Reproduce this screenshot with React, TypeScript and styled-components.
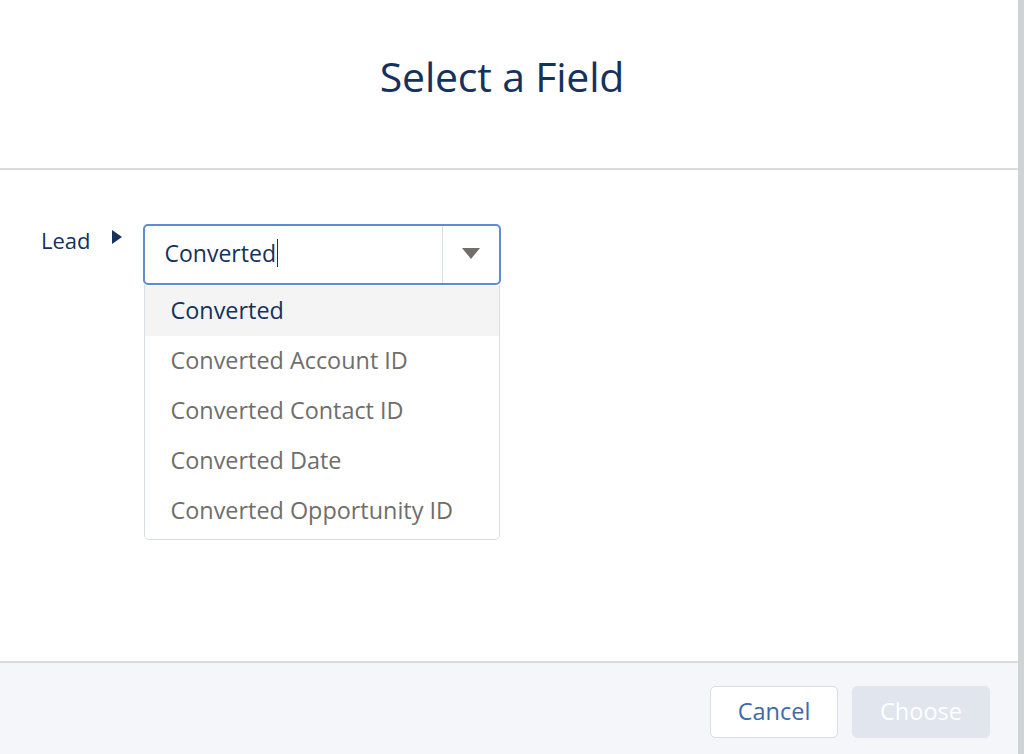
import React, { FC, useState } from "react";
import styled, { createGlobalStyle } from "styled-components";

const GlobalStyle = createGlobalStyle`
  html, body {
    margin: 0;
    padding: 0;
    background: #cfd3d6;
  }
  * {
    box-sizing: border-box;
  }
`;

const fields = [
  "Converted",
  "Converted Account ID",
  "Converted Contact ID",
  "Converted Date",
  "Converted Opportunity ID",
];

const App: FC = () => {
  const [active] = useState(0);

  return (
    <>
      <GlobalStyle />
      <Modal>
        <Header>
          <Title>Select a Field</Title>
        </Header>
        <Body>
          <Crumb>
            <CrumbLabel>Lead</CrumbLabel>
            <CrumbArrow />
          </Crumb>
          <Combo>
            <InputBox>
              <InputText>
                Converted<Caret />
              </InputText>
              <ToggleButton>
                <DownArrow />
              </ToggleButton>
            </InputBox>
            <List>
              {fields.map((f, i) => (
                <Option key={f} active={i === active}>
                  {f}
                </Option>
              ))}
            </List>
          </Combo>
        </Body>
        <Footer>
          <Button>Cancel</Button>
          <Button primary disabled>
            Choose
          </Button>
        </Footer>
      </Modal>
    </>
  );
};

export default App;

const Modal = styled.div`
  width: 1018px;
  height: 754px;
  display: flex;
  flex-direction: column;
  background: #ffffff;
  font-family: "Open Sans", "Noto Sans", sans-serif;
`;

const Header = styled.div`
  height: 170px;
  display: flex;
  align-items: center;
  justify-content: center;
  border-bottom: 2px solid #dddbda;
  padding: 0 14px 16px 0;
`;

const Title = styled.h1`
  margin: 0;
  font-size: 41px;
  font-weight: 400;
  color: #16325c;
  letter-spacing: -0.2px;
`;

const Body = styled.div`
  flex: 1;
  display: flex;
  align-items: flex-start;
  padding: 54px 0 0 41px;
`;

const Crumb = styled.div`
  display: flex;
  align-items: center;
  gap: 21px;
  padding-top: 1px;
  margin-right: 21px;
`;

const CrumbLabel = styled.span`
  font-size: 22px;
  color: #16325c;
`;

const CrumbArrow = styled.span`
  width: 0;
  height: 0;
  border-top: 7px solid transparent;
  border-bottom: 7px solid transparent;
  border-left: 10px solid #16325c;
  margin-top: -6px;
`;

const Combo = styled.div`
  width: 358px;
  display: flex;
  flex-direction: column;
`;

const InputBox = styled.div`
  height: 61px;
  display: flex;
  border: 2px solid #5d8dd0;
  border-radius: 5px;
  background: #ffffff;
`;

const InputText = styled.div`
  flex: 1;
  display: flex;
  align-items: center;
  padding: 0 0 4px 20px;
  font-size: 23px;
  color: #16325c;
  border-right: 1px solid #d8dde6;
`;

const Caret = styled.span`
  display: inline-block;
  width: 1.5px;
  height: 28px;
  background: #16325c;
  margin-left: 1px;
`;

const ToggleButton = styled.div`
  width: 56px;
  display: flex;
  align-items: center;
  justify-content: center;
`;

const DownArrow = styled.span`
  width: 0;
  height: 0;
  border-left: 9px solid transparent;
  border-right: 9px solid transparent;
  border-top: 11px solid #706e6b;
  margin-bottom: 2px;
`;

const List = styled.ul`
  list-style: none;
  margin: 0 1px;
  padding: 1px 0 3px;
  border: 1px solid #d8dde6;
  border-top: none;
  border-radius: 0 0 5px 5px;
  background: #ffffff;
`;

const Option = styled.li<{ active: boolean }>`
  height: 50px;
  display: flex;
  align-items: center;
  padding: 0 0 2px 26px;
  font-size: 23.4px;
  color: ${(p) => (p.active ? "#16325c" : "#706e6b")};
  background: ${(p) => (p.active ? "#f4f4f4" : "transparent")};
`;

const Footer = styled.div`
  height: 93px;
  display: flex;
  align-items: flex-start;
  justify-content: flex-end;
  gap: 14px;
  padding: 23px 28px 0 0;
  background: #f5f6f9;
  border-top: 2px solid #dddbda;
`;

const Button = styled.button<{ primary?: boolean }>`
  height: 52px;
  padding: 0 0 2px;
  width: ${(p) => (p.primary ? "138px" : "128px")};
  border-radius: 5px;
  font-family: "Open Sans", "Noto Sans", sans-serif;
  font-size: 23.5px;
  border: ${(p) => (p.primary ? "1px solid #e0e5ee" : "1px solid #d8dde6")};
  background: ${(p) => (p.primary ? "#e0e5ee" : "#ffffff")};
  color: ${(p) => (p.primary ? "#ffffff" : "#3e6aa6")};
`;
